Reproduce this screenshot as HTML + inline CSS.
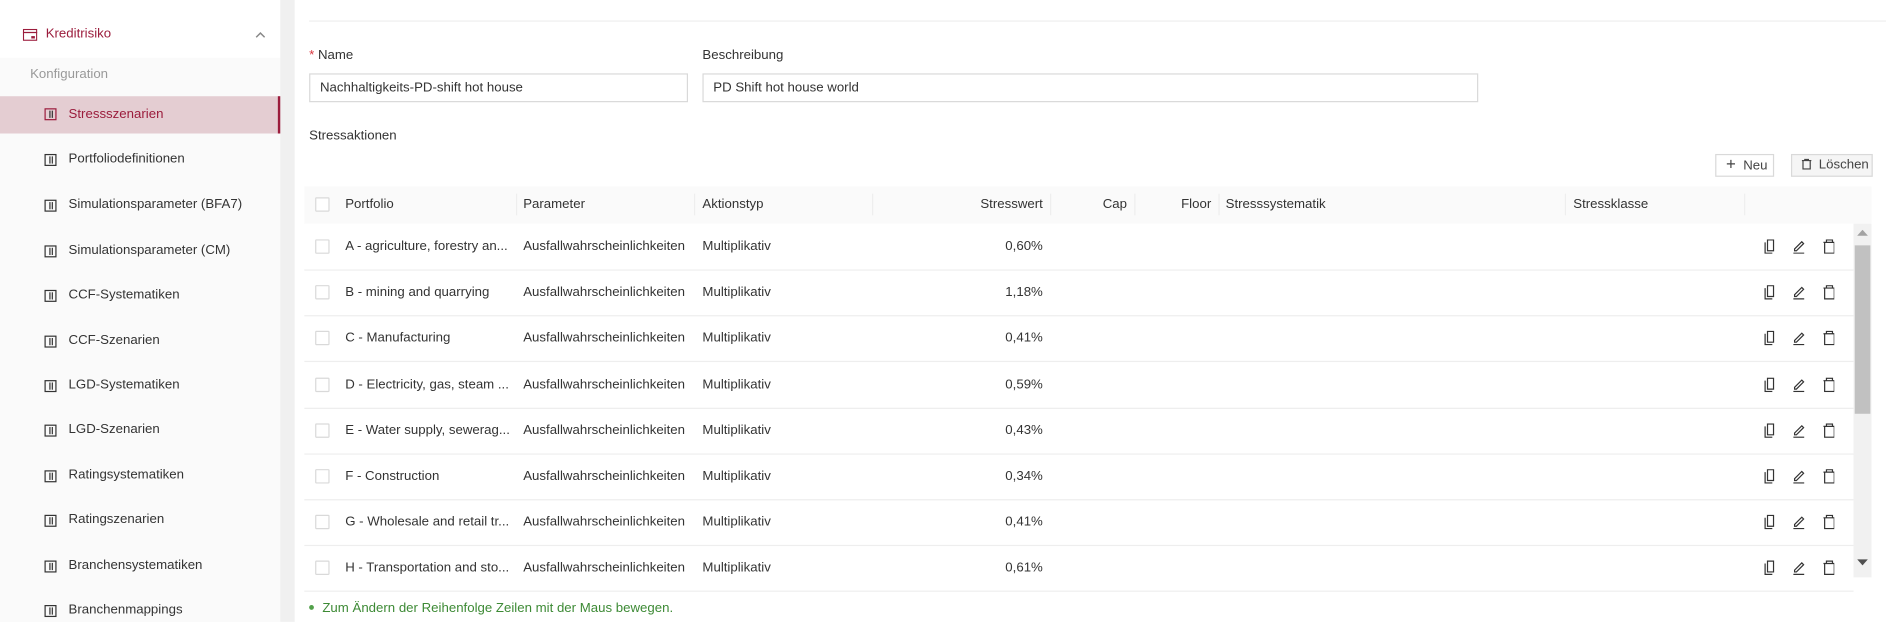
<!DOCTYPE html>
<html><head><meta charset="utf-8"><style>
*{box-sizing:border-box;margin:0;padding:0}
html,body{width:1886px;height:622px;overflow:hidden;background:#fff}
#w{position:absolute;left:0;top:0;width:1568px;height:517px;transform:scale(1.2028);transform-origin:0 0;font-family:"Liberation Sans",sans-serif;font-size:11px;color:#333}
.a{position:absolute;white-space:nowrap}
.side{position:absolute;left:0;top:0;width:233px;height:517px;background:#fafafa}
.gap{position:absolute;left:233px;top:0;width:12px;height:517px;background:#f0f0f0}
.ic{position:absolute;width:10px;height:10px;border:1px solid #333}
.ic:before{content:"";position:absolute;left:3px;top:1px;width:1px;height:6px;background:#333}
.ic:after{content:"";position:absolute;left:5px;top:1px;width:1px;height:6px;background:#333}
.inp{position:absolute;height:24px;border:1px solid #d9d9d9;padding:0 8px;line-height:22px}
.btn{position:absolute;height:19px;border:1px solid #d9d9d9;line-height:17px;padding-left:8px;font-size:11px;color:#444}
.cb{position:absolute;left:262px;width:12px;height:12px;border:1px solid #d9d9d9;background:#fff;border-radius:1px}
.div{position:absolute;top:161px;width:1px;height:18px;background:#eee}
.row{position:absolute;left:253px;width:1288px;height:1px;background:#eee}
</style></head><body><div id="w">
<div class="side"></div>
<div style="position:absolute;left:0;top:0;width:233px;height:48px;background:#fff"></div>
<div class="gap"></div>
<svg class="a" style="left:19px;top:24px" width="12" height="10"><rect x="0.5" y="0.5" width="11" height="9" fill="none" stroke="#9b1c3c"/><line x1="0" y1="3" x2="12" y2="3" stroke="#9b1c3c"/><rect x="7" y="6" width="3" height="2" fill="#9b1c3c"/></svg>
<div class="a" style="left:38px;top:22px;color:#9b1c3c">Kreditrisiko</div>
<svg class="a" style="left:212px;top:26px" width="9" height="6"><path d="M1 5 L4.5 1.5 L8 5" fill="none" stroke="#888" stroke-width="1.2"/></svg>
<div class="a" style="left:25px;top:56px;color:#999">Konfiguration</div>
<div class="a" style="left:0;top:80px;width:233px;height:31px;background:#e4cdd2;border-right:2px solid #9b1c3c"></div>
<div class="ic" style="left:37px;top:90px;border-color:#9b1c3c"></div>
<div class="a" style="left:57px;top:89px;color:#9b1c3c">Stressszenarien</div>
<div class="ic" style="left:37px;top:128px"></div><div class="a" style="left:57px;top:126px">Portfoliodefinitionen</div>
<div class="ic" style="left:37px;top:166px"></div><div class="a" style="left:57px;top:164px">Simulationsparameter (BFA7)</div>
<div class="ic" style="left:37px;top:204px"></div><div class="a" style="left:57px;top:202px">Simulationsparameter (CM)</div>
<div class="ic" style="left:37px;top:241px"></div><div class="a" style="left:57px;top:239px">CCF-Systematiken</div>
<div class="ic" style="left:37px;top:279px"></div><div class="a" style="left:57px;top:277px">CCF-Szenarien</div>
<div class="ic" style="left:37px;top:316px"></div><div class="a" style="left:57px;top:314px">LGD-Systematiken</div>
<div class="ic" style="left:37px;top:353px"></div><div class="a" style="left:57px;top:351px">LGD-Szenarien</div>
<div class="ic" style="left:37px;top:391px"></div><div class="a" style="left:57px;top:389px">Ratingsystematiken</div>
<div class="ic" style="left:37px;top:428px"></div><div class="a" style="left:57px;top:426px">Ratingszenarien</div>
<div class="ic" style="left:37px;top:466px"></div><div class="a" style="left:57px;top:464px">Branchensystematiken</div>
<div class="ic" style="left:37px;top:503px"></div><div class="a" style="left:57px;top:501px">Branchenmappings</div>

<div class="a" style="left:257px;top:17px;width:1311px;height:1px;background:#eee"></div>
<div class="a" style="left:257px;top:40px"><span style="color:#d9363e">*</span> Name</div>
<div class="inp" style="left:257px;top:61px;width:315px">Nachhaltigkeits-PD-shift hot house</div>
<div class="a" style="left:584px;top:40px">Beschreibung</div>
<div class="inp" style="left:584px;top:61px;width:645px">PD Shift hot house world</div>
<div class="a" style="left:257px;top:107px">Stressaktionen</div>
<div class="btn" style="left:1426px;top:128px;width:49px"><span style="font-size:14px;line-height:15px">+</span>&nbsp; Neu</div>
<div class="btn" style="left:1489px;top:128px;width:68px;background:#f5f5f5"><svg width="8" height="9" style="vertical-align:-1px"><path d="M0 1.5h8M2.5 1.5V0.5h3v1M1 1.5v7h6v-7" fill="none" stroke="#444"/></svg>&nbsp; Löschen</div>

<div class="a" style="left:253px;top:155px;width:1303px;height:31px;background:#fafafa"></div>
<div class="cb" style="top:164px"></div>
<div class="a" style="left:287px;top:164px">Portfolio</div>
<div class="div" style="left:429px"></div><div class="a" style="left:435px;top:164px">Parameter</div>
<div class="div" style="left:577px"></div><div class="a" style="left:584px;top:164px">Aktionstyp</div>
<div class="div" style="left:725px"></div><div class="a" style="left:725px;top:164px;width:142px;text-align:right">Stresswert</div>
<div class="div" style="left:873px"></div><div class="a" style="left:873px;top:164px;width:64px;text-align:right">Cap</div>
<div class="div" style="left:943px"></div><div class="a" style="left:943px;top:164px;width:64px;text-align:right">Floor</div>
<div class="div" style="left:1013px"></div><div class="a" style="left:1019px;top:164px">Stresssystematik</div>
<div class="div" style="left:1301px"></div><div class="a" style="left:1308px;top:164px">Stressklasse</div>
<div class="div" style="left:1450px"></div>
<div class="a" style="left:1541px;top:186px;width:15px;height:294px;background:#f1f1f1"></div>
<div class="a" style="left:1542px;top:204px;width:13px;height:140px;background:#c1c1c1"></div>
<svg class="a" style="left:1544px;top:191px" width="9" height="6"><path d="M0 5L4.5 0L9 5Z" fill="#a3a3a3"/></svg>
<svg class="a" style="left:1544px;top:465px" width="9" height="6"><path d="M0 0L4.5 5L9 0Z" fill="#505050"/></svg>
<div id="rows"></div>
<div class="a" style="left:257px;top:503px;width:4px;height:4px;border-radius:50%;background:#52a04a"></div>
<div class="a" style="left:268px;top:500px;color:#3d8a35">Zum Ändern der Reihenfolge Zeilen mit der Maus bewegen.</div>
</div>
<script>
var d=[["A - agriculture, forestry an...","0,60%"],["B - mining and quarrying","1,18%"],["C - Manufacturing","0,41%"],["D - Electricity, gas, steam ...","0,59%"],["E - Water supply, sewerag...","0,43%"],["F - Construction","0,34%"],["G - Wholesale and retail tr...","0,41%"],["H - Transportation and sto...","0,61%"]];
var h="";
d.forEach(function(r,i){var c=205+i*38.2;var t=c-6;
h+='<div class="row" style="top:'+(c+19)+'px"></div>';
h+='<div class="cb" style="top:'+(c-6)+'px"></div>';
h+='<div class="a" style="left:287px;top:'+t+'px">'+r[0]+'</div>';
h+='<div class="a" style="left:435px;top:'+t+'px">Ausfallwahrscheinlichkeiten</div>';
h+='<div class="a" style="left:584px;top:'+t+'px">Multiplikativ</div>';
h+='<div class="a" style="left:725px;top:'+t+'px;width:142px;text-align:right">'+r[1]+'</div>';
h+='<svg class="a" style="left:1465px;top:'+(c-6)+'px" width="60" height="12"><path d="M2.5 2.5v9h6M4.5 0.5h5v9h-5z" fill="none" stroke="#333"/><path d="M27 8l6-6 1.5 1.5-6 6h-1.5zM26 11.5h9" fill="none" stroke="#333"/><path d="M51 2.5h10M53.5 2.5v-2h5v2M52 2.5v9h8v-9" fill="none" stroke="#333"/></svg>';
});
document.getElementById("rows").outerHTML=h;
</script>
</body></html>
